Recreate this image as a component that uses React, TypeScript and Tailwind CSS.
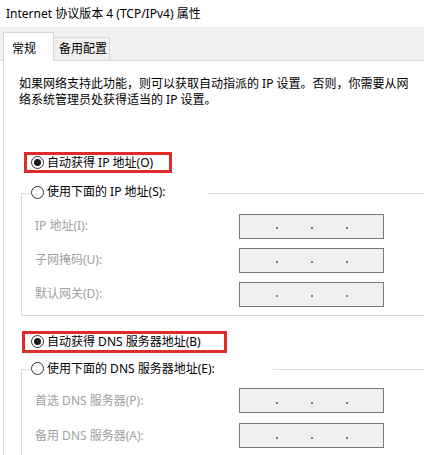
import React from "react";

const font = "font-['Noto_Sans','Noto_Sans_CJK_SC',sans-serif]";

function Radio({ checked }: { checked?: boolean }) {
  return (
    <span className="w-[13px] h-[13px] rounded-full border border-[#333] bg-white flex items-center justify-center shrink-0">
      {checked && <span className="w-[7px] h-[7px] rounded-full bg-[#1a1a1a]" />}
    </span>
  );
}

function IpBox() {
  return (
    <div className="w-[145px] h-[25px] border border-[#7a7a7a] bg-[#f0f0f0] flex items-center pl-[36px] gap-[33px]">
      <span className="w-[2px] h-[2px] mt-[4px] bg-[#777]" />
      <span className="w-[2px] h-[2px] mt-[4px] bg-[#777]" />
      <span className="w-[2px] h-[2px] mt-[4px] bg-[#777]" />
    </div>
  );
}

function Row({ label }: { label: string }) {
  return (
    <div className="flex items-center pl-[13px]">
      <span className="w-[204px] text-[#a0a0a0] leading-[16px]">{label}</span>
      <IpBox />
    </div>
  );
}

export default function App() {
  return (
    <div className={`w-[424px] h-[455px] overflow-hidden bg-white text-[12px] text-black ${font}`}>
      {/* title */}
      <div className="h-[27px] pl-[6px] flex items-center leading-[16px]">
        Internet 协议版本 4 (TCP/IPv4) 属性
      </div>

      {/* tabs */}
      <div className="h-[34px] bg-[#f0f0f0] border-b border-[#d9d9d9] flex items-end pl-[3px]">
        <div className="w-[51px] h-[29px] -mb-px bg-white border border-b-0 border-[#d9d9d9] pl-[8px] pt-[8px] leading-[16px]">
          常规
        </div>
        <div className="w-[56px] h-[23px] border-t border-r border-[#d9d9d9] pl-[5px] pt-[3px] leading-[16px]">
          备用配置
        </div>
      </div>

      {/* panel */}
      <div className="ml-[3px] h-[394px] border-l border-[#d9d9d9] bg-white flex flex-col overflow-hidden">
        <p className="pl-[15px] pt-[15px] leading-[16px] whitespace-nowrap">
          如果网络支持此功能，则可以获取自动指派的 IP 设置。否则，你需要从网
          <br />
          络系统管理员处获得适当的 IP 设置。
        </p>

        <div className="mt-[44px] ml-[20px] w-[148px] h-[21px] border-[3px] border-[#e02b2b] flex items-center pl-[4px] gap-[3px] leading-[16px]">
          <Radio checked />
          <span>自动获得 IP 地址(O)</span>
        </div>

        <fieldset className="mt-[10px] ml-[17px] w-[420px] border border-[#dcdcdc] pt-[10px] pb-[8px] flex flex-col gap-[9px]">
          <legend className="ml-[7px] pl-[2px] pr-[42px]">
            <span className="inline-flex h-[18px] items-center gap-[3px] leading-[16px]">
              <Radio />
              <span>使用下面的 IP 地址(S):</span>
            </span>
          </legend>
          <Row label="IP 地址(I):" />
          <Row label="子网掩码(U):" />
          <Row label="默认网关(D):" />
        </fieldset>

        <div className="mt-[15px] ml-[18px] w-[205px] h-[25px] border-[3px] border-[#e02b2b] flex items-center pl-[6px] gap-[3px] leading-[16px]">
          <Radio checked />
          <span>自动获得 DNS 服务器地址(B)</span>
        </div>

        <fieldset className="mt-[7px] ml-[17px] w-[420px] border border-[#dcdcdc] pt-[8px] pb-[8px] flex flex-col gap-[10px]">
          <legend className="ml-[7px] pl-[2px] pr-[58px]">
            <span className="inline-flex h-[18px] items-center gap-[3px] leading-[16px]">
              <Radio />
              <span>使用下面的 DNS 服务器地址(E):</span>
            </span>
          </legend>
          <Row label="首选 DNS 服务器(P):" />
          <Row label="备用 DNS 服务器(A):" />
        </fieldset>
      </div>
    </div>
  );
}
